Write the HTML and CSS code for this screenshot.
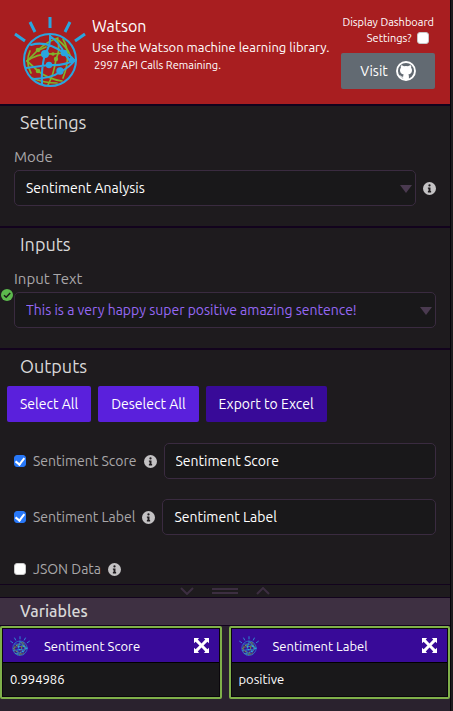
FILE: index.html
```html
<!DOCTYPE html>
<html lang="en">
<head>
<meta charset="utf-8">
<meta name="viewport" content="width=device-width, initial-scale=1">
<title>Watson</title>
<link rel="stylesheet" href="styles.css">
</head>
<body>
<svg class="defs" aria-hidden="true">
  <symbol id="watson" viewBox="0 0 72 72">
    <g transform="translate(0 1)">
      <g fill="none" stroke="#7fb52c" stroke-width="1.7" stroke-linecap="round">
        <path d="M13 44 24 33Q34 24 44 21"/>
        <path d="M13 44Q24 36 39 37L50 36Q57 37 60 44"/>
        <path d="M13 44 24 54Q34 62 48 64"/>
        <path d="M16 34Q11 45 17 56"/>
        <path d="M43 22Q47 32 42 42Q40 57 34 68"/>
        <path d="M25 33 32 30M44 23Q53 30 56 38"/>
        <path d="M49 22Q58 38 49 61"/>
        <path d="M18 61Q30 66 43 66"/>
      </g>
      <g fill="#7fb52c"><circle cx="24" cy="33" r="2.3"/><circle cx="24" cy="54" r="2.3"/><circle cx="39" cy="37" r="1.8"/><circle cx="42" cy="42" r="2.2"/></g>
      <g fill="none" stroke="#2aa5df" stroke-width="2.1" stroke-linecap="round">
        <circle cx="36" cy="43" r="26"/>
        <path d="M31 37Q37 28 36 18M31 37Q27 52 28 67M36 19Q46 26 50 36L56 44M50 36Q55 37 61 44M61 43Q50 49 35 48L12 51M61 43Q56 50 46 55Q38 61 20 62M17 28Q32 23 50 36"/>
      </g>
      <g fill="#2aa5df"><circle cx="31" cy="37" r="4"/><circle cx="50" cy="36" r="3.3"/><circle cx="35" cy="48" r="3.2"/><circle cx="46" cy="54" r="3.7"/><circle cx="57" cy="43" r="2.200"/></g>
    </g>
    <path fill="none" stroke="#2aa5df" stroke-width="3" d="M36 1V12M16 6 21 16M56 6 51 16M1 18 11 25M71 18 61 25"/>
  </symbol>
  <symbol id="info" viewBox="0 0 16 16">
    <path fill="currentColor" fill-rule="evenodd" d="M8 0a8 8 0 1 1 0 16A8 8 0 0 1 8 0zM8 2.8a1.4 1.4 0 1 0 0 2.8 1.4 1.4 0 0 0 0-2.8zM6 6.7v1.6h.8v2.9H6v1.6h4v-1.6h-.8V6.7z"/>
  </symbol>
  <symbol id="expand" viewBox="0 0 16 16">
    <path fill="currentColor" d="M0 0H5.5L4 1.7 8 5.8 12 1.7 10.500 0H16V5.500L14.300 4 10.200 8 14.300 12 16 10.500V16H10.500L12 14.300 8 10.200 4 14.300 5.500 16H0V10.500L1.700 12 5.800 8 1.700 4 0 5.500z"/>
  </symbol>
</svg>

<div class="app">
  <header class="hero">
    <svg class="hero-logo" role="img" aria-label="Watson logo"><use href="#watson"/></svg>
    <div class="hero-text">
      <h1>Watson</h1>
      <p>Use the Watson machine learning library.</p>
      <p class="calls">2997 API Calls Remaining.</p>
    </div>
    <div class="hero-side">
      <label class="dash" for="dash">Display Dashboard Settings? <input type="checkbox" id="dash"></label>
      <a class="visit" href="#">Visit
        <svg class="github" viewBox="0 0 20 20" aria-hidden="true">
          <circle cx="10" cy="10" r="9" fill="none" stroke="#fff" stroke-width="1.900"/>
          <path fill="#fff" d="M5 4.200Q6.600 4.200 8 5.200Q10 4.800 12 5.200Q13.400 4.200 15 4.200Q15.500 5.500 15.100 6.700Q16.100 7.900 16 9.500Q15.800 13 12.300 13.600Q12.900 14.200 12.900 15.300V18.500Q10 19.800 7.100 18.500V16.800Q4.900 17.200 4.100 15.300L3.200 14.300Q4.300 14 5.200 15.300Q6 16 7.200 15.500Q7.200 14.200 7.700 13.600Q4.200 13 4 9.500Q3.900 7.900 4.900 6.700Q4.500 5.500 5 4.200z"/>
        </svg>
      </a>
    </div>
  </header>

  <section class="panel">
    <h2>Settings</h2>
    <label class="field-label" for="mode">Mode</label>
    <div class="row">
      <div class="combo"><select class="box" id="mode"><option>Sentiment Analysis</option></select></div>
      <svg class="info"><use href="#info"/></svg>
    </div>
  </section>

  <section class="panel">
    <h2>Inputs</h2>
    <label class="field-label" for="text">Input Text</label>
    <div class="row">
      <div class="combo">
        <input class="box linked" id="text" type="text" value="This is a very happy super positive amazing sentence!">
        <svg class="ok" viewBox="0 0 12 12" aria-hidden="true"><circle cx="6" cy="6" r="6" fill="#5cb94d"/><path d="M3 6.200 5.200 8.300 9.200 4" fill="none" stroke="#1b191b" stroke-width="1.500"/></svg>
      </div>
    </div>
  </section>

  <section class="panel outputs">
    <h2>Outputs</h2>
    <div class="actions">
      <button type="button">Select All</button>
      <button type="button">Deselect All</button>
      <button type="button" class="export">Export to Excel</button>
    </div>
    <div class="output">
      <input type="checkbox" id="score" checked>
      <label for="score">Sentiment Score</label>
      <svg class="info"><use href="#info"/></svg>
      <input class="box" type="text" aria-label="Sentiment Score name" value="Sentiment Score">
    </div>
    <div class="output">
      <input type="checkbox" id="label" checked>
      <label for="label">Sentiment Label</label>
      <svg class="info"><use href="#info"/></svg>
      <input class="box" type="text" aria-label="Sentiment Label name" value="Sentiment Label">
    </div>
    <div class="output last">
      <input type="checkbox" id="json">
      <label for="json">JSON Data</label>
      <svg class="info"><use href="#info"/></svg>
    </div>
  </section>

  <div class="splitter">
    <svg class="chevron" viewBox="0 0 14 8"><path d="M1 1 7 7 13 1"/></svg>
    <span class="grip"></span>
    <svg class="chevron" viewBox="0 0 14 8"><path d="M1 7 7 1 13 7"/></svg>
  </div>

  <section class="variables">
    <h2>Variables</h2>
    <div class="cards">
      <article class="card">
        <header><svg class="card-logo"><use href="#watson"/></svg><h3>Sentiment Score</h3>
          <button type="button" aria-label="Expand"><svg><use href="#expand"/></svg></button></header>
        <p>0.994986</p>
      </article>
      <article class="card">
        <header><svg class="card-logo"><use href="#watson"/></svg><h3>Sentiment Label</h3>
          <button type="button" aria-label="Expand"><svg><use href="#expand"/></svg></button></header>
        <p>positive</p>
      </article>
    </div>
  </section>
</div>
</body>
</html>
```
FILE: styles.css
```css
* { box-sizing: border-box; }

body {
  margin: 0;
  background: #1e1b1e;
  color: #d8d8d8;
  font: 14px/20px Ubuntu, "Noto Sans", sans-serif;
}

h1, h2, h3, p { margin: 0; font-weight: 400; }
button, input, select { font: inherit; color: inherit; margin: 0; }
.defs { position: absolute; width: 0; height: 0; }

.app {
  display: flex;
  flex-direction: column;
  min-height: 100vh;
  margin-right: 2px;
  border-right: 1px solid #08040a;
}

input[type="checkbox"] {
  appearance: none;
  display: grid;
  place-items: center;
  flex: none;
  width: 12px;
  height: 12px;
  border: 1px solid #c8c8c8;
  border-radius: 3px;
  background: #fff;
}
input[type="checkbox"]:checked { background: #2878f8; border-color: #2878f8; }
input[type="checkbox"]:checked::after {
  content: "";
  width: 4px;
  height: 7px;
  margin-bottom: 2px;
  border: solid #fff;
  border-width: 0 2px 2px 0;
  transform: rotate(38deg);
}

/* Header */
.hero {
  display: flex;
  height: 106px;
  padding: 16px 15px 0 14px;
  background: #a81e20;
  border-bottom: 2px solid #12031d;
  color: #fff;
}
.hero-logo { width: 72px; height: 72px; flex: none; }
.hero-text { flex: 1; min-width: 0; padding-left: 6px; white-space: nowrap; font-size: 13px; }
.hero-text h1 { font-size: 16px; line-height: 21px; }
.hero-text p { line-height: 20px; }
.hero-text .calls { padding-left: 2px; font-size: 11px; line-height: 16px; }
.hero-side { display: flex; flex-direction: column; gap: 7px; width: 94px; flex: none; margin-top: -2px; }
.dash { text-align: right; font-size: 11px; line-height: 16px; padding-right: 1px; }
.dash input[type="checkbox"] { display: inline-block; vertical-align: -2px; margin: 0 5px 0 3px; }
.visit {
  display: flex;
  align-items: center;
  justify-content: center;
  gap: 8px;
  height: 36px;
  border-radius: 2px;
  background: #626a72;
  color: #fff;
  text-decoration: none;
}
.github { width: 20px; height: 20px; }

/* Panels */
.panel { padding: 3px 14px 20px; background: #1e1b1e; border-bottom: 2px solid #12031d; }
.panel h2 { padding-left: 6px; font-size: 18px; line-height: 26px; }
.field-label { display: block; margin-top: 12px; color: #a9a7a9; font-size: 15px; line-height: 20px; }
.row { display: flex; align-items: center; gap: 7px; margin-top: 3px; }
.combo { position: relative; flex: 1; }
.combo::after {
  content: "";
  position: absolute;
  right: 4px;
  top: 15px;
  border: solid transparent;
  border-width: 8px 6px 0;
  border-top-color: #4a3a50;
}
.box {
  appearance: none;
  display: block;
  width: 100%;
  min-width: 0;
  height: 36px;
  padding: 0 11px 1px;
  border: 1px solid #3a2b40;
  border-radius: 5px;
  background: #19181a;
  color: #fff;
}
.linked { color: #9668f4; }
.info { width: 13px; height: 13px; flex: none; color: #c4c2c4; }
.ok { position: absolute; left: -13px; top: -3px; width: 12px; height: 12px; }

/* Outputs */
.outputs { padding-bottom: 5px; border-bottom-width: 1px; }
.actions { display: flex; gap: 7px; margin: 7px 0 21px -7px; }
.actions button {
  height: 36px;
  padding: 0 13px 1px;
  border: 0;
  border-radius: 2px;
  background: #5a20dc;
  color: #fff;
}
.actions .export { background: #380a98; }
.output { display: flex; align-items: center; gap: 7px; margin-top: 20px; color: #a9a7a9; white-space: nowrap; }
.output .box { flex: 1; }
.last { margin-top: 24px; }

/* Splitter */
.splitter {
  display: flex;
  align-items: center;
  justify-content: center;
  gap: 18px;
  height: 13px;
  background: #1e1b1e;
  border-bottom: 1px solid #12031d;
}
.chevron { width: 14px; height: 8px; fill: none; stroke: #3c2e41; stroke-width: 2; }
.grip { width: 26px; height: 6px; border: solid #3c2e41; border-width: 2px 0; }

/* Variables */
.variables { flex: 1; background: #2a222e; }
.variables h2 {
  padding-left: 20px;
  background: #3e3042;
  border-bottom: 1px solid #12031d;
  font-size: 16px;
  font-weight: 500;
  line-height: 27px;
}
.cards { display: grid; grid-template-columns: 1fr 1fr; gap: 7px; }
.card {
  padding: 1px;
  border: 2px solid #7fb04a;
  border-radius: 2px;
  background: #19181a;
  box-shadow: inset 0 0 0 1px #0a060c;
  color: #fff;
  font-size: 13px;
}
.card header {
  display: flex;
  align-items: center;
  height: 34px;
  padding: 0 10px 0 7px;
  background: #380a98;
  border-bottom: 1px solid #000;
}
.card-logo { width: 20px; height: 20px; }
.card h3 { flex: 1; padding-left: 14px; font-size: 13px; }
.card button { display: flex; padding: 0; border: 0; background: none; }
.card button svg { width: 15px; height: 15px; }
.card p { padding: 0 7px; line-height: 33px; }
```
